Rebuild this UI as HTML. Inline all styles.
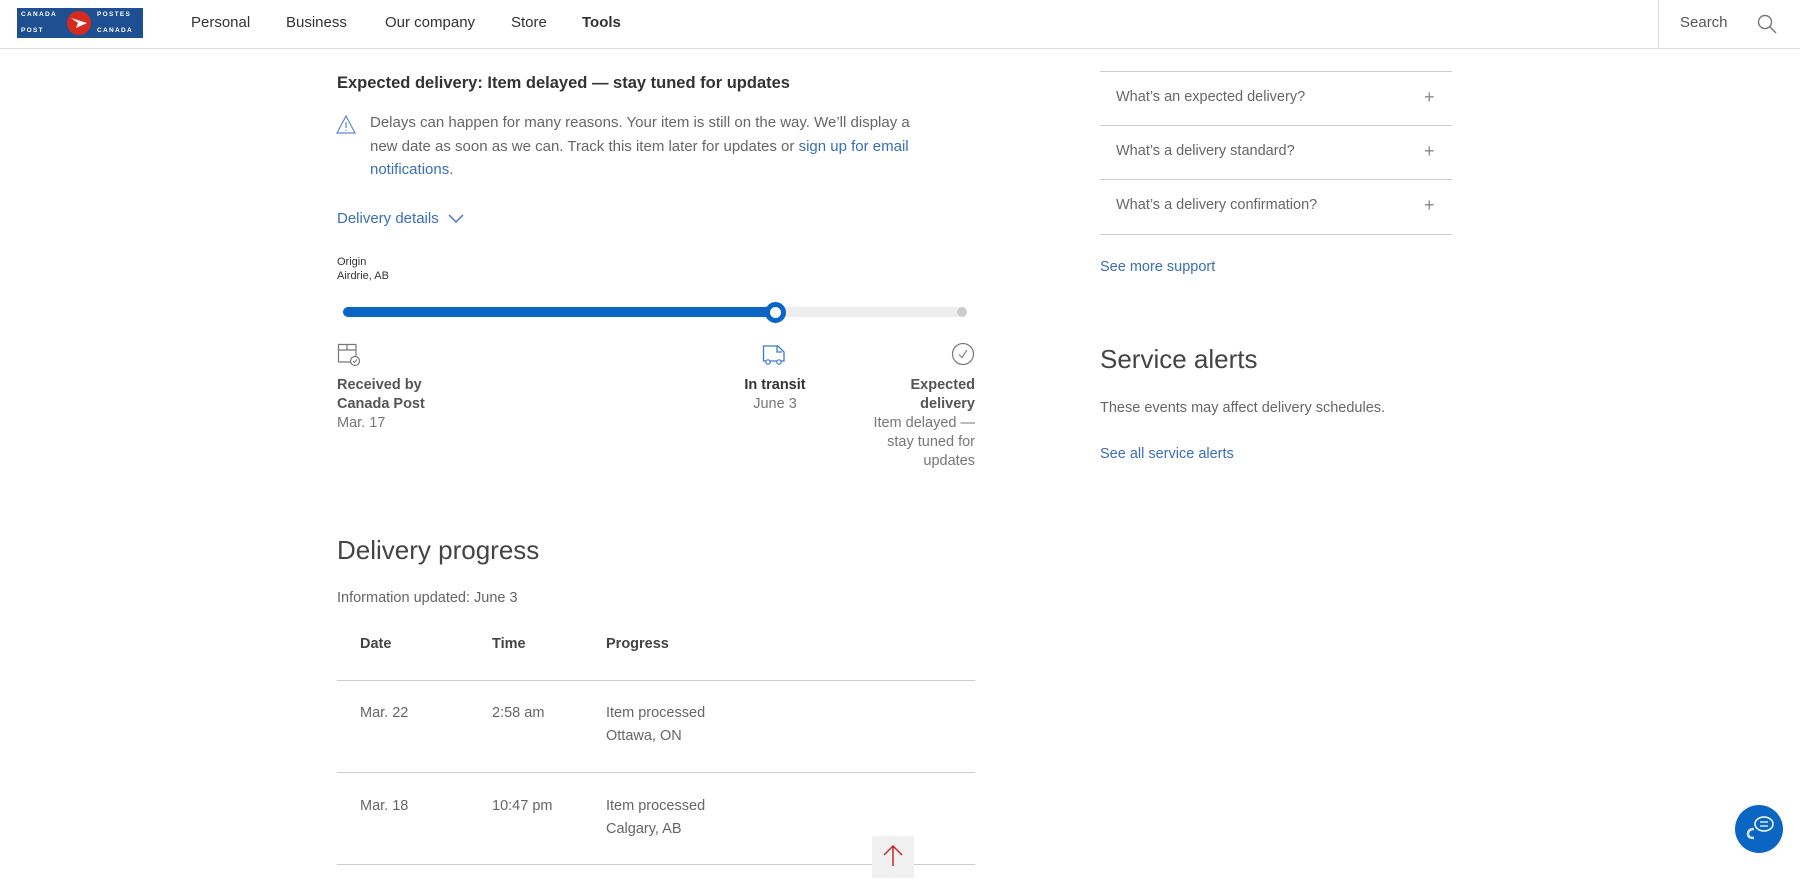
<!DOCTYPE html>
<html><head><meta charset="utf-8"><style>
*{margin:0;padding:0;box-sizing:border-box}
body{width:1800px;height:893px;overflow:hidden;background:#fff;font-family:"Liberation Sans",Arial,sans-serif;color:#333;position:relative}
.a{position:absolute;white-space:nowrap}
.nav{font-size:15px;color:#333;top:14px}
.lnk{color:#3a6eb5}
.g{color:#666}
.hr{position:absolute;height:1px;background:#ccc}
.t{font-size:14.5px;line-height:23px}
</style></head><body>
<div class="hr" style="left:0;top:48px;width:1800px;background:#ddd"></div>
<div class="a" style="left:17px;top:8px;width:126px;height:30px;background:#1d4f91;color:#fff;font-size:6.5px;letter-spacing:1.3px;font-weight:bold">
<span class="a" style="left:4px;top:3px">CANADA</span><span class="a" style="left:4px;top:19px">POST</span>
<span class="a" style="left:80px;top:3px">POSTES</span><span class="a" style="left:80px;top:19px">CANADA</span>
<div class="a" style="left:50px;top:3px;width:24px;height:24px;border-radius:50%;background:#d52b1e"></div>
<svg class="a" style="left:53px;top:8px" width="18" height="14" viewBox="0 0 18 14"><path d="M1 2 L17 7 L6 12 L8 7 Z" fill="#fff"/></svg>
</div>
<div class="a nav" style="left:191px">Personal</div>
<div class="a nav" style="left:286px">Business</div>
<div class="a nav" style="left:385px">Our company</div>
<div class="a nav" style="left:511px">Store</div>
<div class="a nav" style="left:582px;font-weight:bold">Tools</div>
<div class="a" style="left:1658px;top:0;width:1px;height:48px;background:#ddd"></div>
<div class="a nav" style="left:1680px;color:#555">Search</div>
<svg class="a" style="left:1756px;top:13px" width="22" height="22" viewBox="0 0 22 22"><circle cx="9" cy="9" r="6.5" fill="none" stroke="#777" stroke-width="1.4"/><path d="M14 14 L20 20" stroke="#777" stroke-width="1.4"/></svg>

<div class="a" style="left:337px;top:74px;font-size:16.5px;font-weight:bold;color:#333">Expected delivery: Item delayed — stay tuned for updates</div>
<svg class="a" style="left:336px;top:115px" width="20" height="19" viewBox="0 0 20 19"><path d="M10 1 L19 18 L1 18 Z" fill="none" stroke="#5a8ac6" stroke-width="1.2"/><path d="M10 7 V13 M10 15 V16" stroke="#5a8ac6" stroke-width="1.2"/></svg>
<div class="a g" style="left:370px;top:111px;font-size:15px;line-height:23.5px;white-space:normal;width:555px">Delays can happen for many reasons. Your item is still on the way. We’ll display a new date as soon as we can. Track this item later for updates or <span class="lnk">sign up for email notifications</span>.</div>
<div class="a lnk" style="left:337px;top:210px;font-size:15px">Delivery details</div>
<svg class="a" style="left:448px;top:214px" width="16" height="10" viewBox="0 0 16 10"><path d="M1 1 L8 8 L15 1" fill="none" stroke="#3a6eb5" stroke-width="1.3"/></svg>

<div class="a" style="left:337px;top:255px;font-size:11px;color:#333;line-height:14px">Origin<br>Airdrie, AB</div>
<div class="a" style="left:343px;top:307px;width:620px;height:10px;border-radius:5px;background:#eee"></div>
<div class="a" style="left:343px;top:307px;width:433px;height:10px;border-radius:5px;background:#0a66c2"></div>
<div class="a" style="left:957px;top:307px;width:10px;height:10px;border-radius:50%;background:#ccc"></div>
<div class="a" style="left:765px;top:302px;width:21px;height:21px;border-radius:50%;background:#fff;border:5px solid #0a66c2"></div>

<svg class="a" style="left:337px;top:343px" width="24" height="24" viewBox="0 0 24 24"><path d="M14 19 H1.5 V1.5 H19 V13 M1.5 7 H19 M10 1.5 V7" fill="none" stroke="#777" stroke-width="1.2"/><circle cx="18" cy="18" r="4.5" fill="#fff" stroke="#777" stroke-width="1.2"/><path d="M16 18 L17.5 19.5 L20 16.5" fill="none" stroke="#777" stroke-width="1"/></svg>
<svg class="a" style="left:762px;top:343px" width="26" height="24" viewBox="0 0 26 24"><path d="M1.5 18 V3 H16 L22 9 V18 Z M15 3 V9 H20" fill="none" stroke="#3a7cc8" stroke-width="1.3"/><circle cx="6" cy="19" r="2.2" fill="#fff" stroke="#3a7cc8" stroke-width="1.2"/><circle cx="17" cy="19" r="2.2" fill="#fff" stroke="#3a7cc8" stroke-width="1.2"/></svg>
<svg class="a" style="left:951px;top:342px" width="24" height="24" viewBox="0 0 24 24"><circle cx="12" cy="12" r="10.5" fill="none" stroke="#777" stroke-width="1.2"/><path d="M8 12.5 L11 15.5 L16 8" fill="none" stroke="#777" stroke-width="1.1"/></svg>

<div class="a" style="left:337px;top:376px;font-size:14.5px;line-height:19px;color:#555"><b>Received by<br>Canada Post</b><br><span style="color:#777">Mar. 17</span></div>
<div class="a" style="left:725px;width:100px;text-align:center;top:376px;font-size:14.5px;line-height:19px;color:#333"><b>In transit</b><br><span style="color:#777">June 3</span></div>
<div class="a" style="left:825px;width:150px;text-align:right;top:376px;font-size:14.5px;line-height:19px;color:#555"><b>Expected<br>delivery</b><br><span style="color:#777">Item delayed —<br>stay tuned for<br>updates</span></div>

<div class="a" style="left:337px;top:535px;font-size:26px;font-weight:300;color:#444">Delivery progress</div>
<div class="a g" style="left:337px;top:590px;font-size:14.5px">Information updated: June 3</div>
<div class="a" style="left:360px;top:636px;font-size:14.5px;font-weight:bold;color:#444">Date</div>
<div class="a" style="left:492px;top:636px;font-size:14.5px;font-weight:bold;color:#444">Time</div>
<div class="a" style="left:606px;top:636px;font-size:14.5px;font-weight:bold;color:#444">Progress</div>
<div class="hr" style="left:337px;top:680px;width:638px"></div>
<div class="a g t" style="left:360px;top:702px">Mar. 22</div>
<div class="a g t" style="left:492px;top:702px">2:58 am</div>
<div class="a g t" style="left:606px;top:702px">Item processed<br>Ottawa, ON</div>
<div class="hr" style="left:337px;top:772px;width:638px"></div>
<div class="a g t" style="left:360px;top:795px">Mar. 18</div>
<div class="a g t" style="left:492px;top:795px">10:47 pm</div>
<div class="a g t" style="left:606px;top:795px">Item processed<br>Calgary, AB</div>
<div class="hr" style="left:337px;top:864px;width:638px"></div>
<div class="a" style="left:872px;top:836px;width:42px;height:42px;background:#f0f0f0"></div>
<svg class="a" style="left:882px;top:844px" width="22" height="24" viewBox="0 0 22 24"><path d="M11 22 V2 M2 11 L11 2 L20 11" fill="none" stroke="#c62828" stroke-width="1.5"/></svg>

<div class="hr" style="left:1100px;top:71px;width:352px"></div>
<div class="a g" style="left:1116px;top:89px;font-size:14.5px">What’s an expected delivery?</div>
<div class="hr" style="left:1100px;top:125px;width:352px"></div>
<div class="a g" style="left:1116px;top:143px;font-size:14.5px">What’s a delivery standard?</div>
<div class="hr" style="left:1100px;top:179px;width:352px"></div>
<div class="a g" style="left:1116px;top:197px;font-size:14.5px">What’s a delivery confirmation?</div>
<div class="hr" style="left:1100px;top:234px;width:352px"></div>
<div class="a" style="left:1424px;top:87px;font-size:18px;color:#888;font-weight:300">+</div>
<div class="a" style="left:1424px;top:141px;font-size:18px;color:#888;font-weight:300">+</div>
<div class="a" style="left:1424px;top:195px;font-size:18px;color:#888;font-weight:300">+</div>
<div class="a lnk" style="left:1100px;top:259px;font-size:14.5px">See more support</div>
<div class="a" style="left:1100px;top:344px;font-size:26px;font-weight:300;color:#444">Service alerts</div>
<div class="a g" style="left:1100px;top:400px;font-size:14.5px">These events may affect delivery schedules.</div>
<div class="a lnk" style="left:1100px;top:446px;font-size:14.5px">See all service alerts</div>

<div class="a" style="left:1735px;top:805px;width:48px;height:48px;border-radius:50%;background:#0a66c2"></div>
<svg class="a" style="left:1740px;top:812px" width="40" height="34" viewBox="0 0 40 34"><ellipse cx="24" cy="12" rx="9" ry="7" fill="#0a66c2" stroke="#fff" stroke-width="1.5"/><path d="M20 10 H28 M20 14 H28" stroke="#fff" stroke-width="1.3"/><path d="M14 17 q-6 0 -6 5 q0 4 6 4" fill="none" stroke="#cfe0f5" stroke-width="2.5"/></svg>
</body></html>
